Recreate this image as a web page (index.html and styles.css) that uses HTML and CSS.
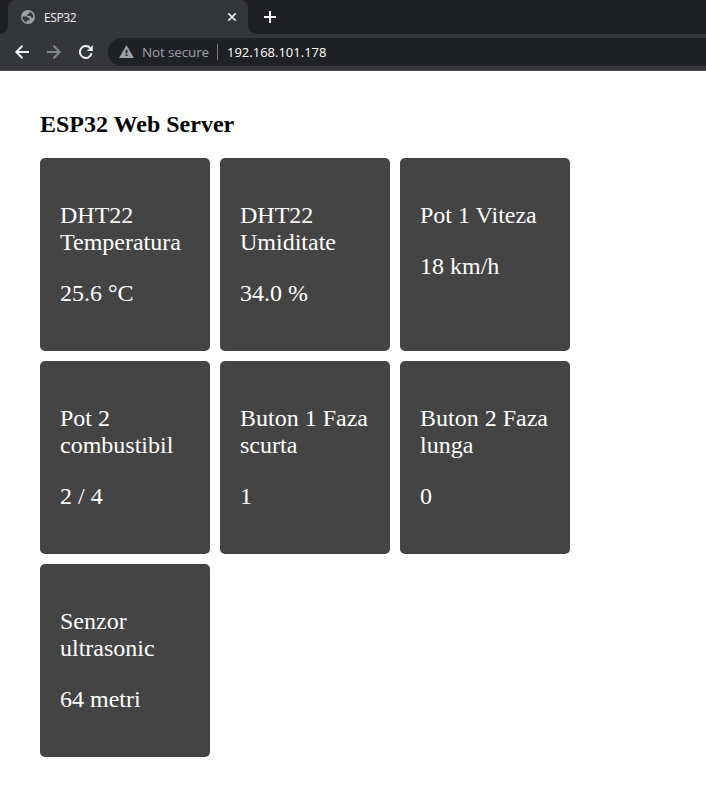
FILE: index.html
```html
<!DOCTYPE html>
<html lang="ro">
<head>
<meta charset="utf-8">
<title>ESP32</title>
<link rel="stylesheet" href="styles.css">
</head>
<body>
<header class="browser">
  <div class="tabs">
    <div class="tab">
      <svg class="globe" width="14" height="14" viewBox="0 0 14 14"><circle cx="7" cy="7" r="7" fill="#9aa0a6"/><path fill="#35363a" d="M1.500 6.500H5c1.300 0 2 .7 2 1.700h1.500v1.300c0 .7-.5 1.100-1.500 1.100H5.800v1.800C3.300 12 1.400 9.800 1.500 6.500zM8.300 1.700v1.100c0 .8-.5 1.200-1.200 1.200H6.200v1c0 .7.500 1 1.300 1h1.700c.5 0 .8.400.8.900s.4.900 1 .9h1.400C12.600 4.800 11 2.400 8.300 1.700z"/></svg>
      <span class="tab-title">ESP32</span>
      <svg class="close" width="10" height="10" viewBox="0 0 10 10"><path d="M1.300 1.300 8.700 8.700M8.700 1.300 1.300 8.700" stroke="#e8eaed" stroke-width="1.700"/></svg>
    </div>
    <svg class="plus" width="12" height="12" viewBox="0 0 12 12"><path d="M6 0v12M0 6h12" stroke="#fff" stroke-width="2"/></svg>
  </div>
  <div class="toolbar">
    <svg class="back" width="14" height="14" viewBox="0 0 14 14"><path d="M14 7H1.500M7.500.8 1.300 7l6.200 6.200" fill="none" stroke="#f1f3f4" stroke-width="2"/></svg>
    <svg class="forward" width="14" height="14" viewBox="0 0 14 14"><path d="M0 7h12.500M6.500.8 12.700 7l-6.200 6.200" fill="none" stroke="#85868a" stroke-width="2"/></svg>
    <svg class="reload" width="14" height="14" viewBox="0 0 14 14"><path d="M12.600 8.300A5.900 5.900 0 1 1 11.200 3" fill="none" stroke="#f1f3f4" stroke-width="2"/><path d="M13.800 0v6H7.800z" fill="#f1f3f4"/></svg>
    <div class="address">
      <svg class="warning" width="15" height="13" viewBox="0 0 15 13"><path d="M7.500 0 15 13H0z" fill="#9aa0a6"/><path d="M7.500 4.700v3.600M7.500 9.300V11" stroke="#202124" stroke-width="1.800"/></svg>
      <span class="security">Not secure</span>
      <span class="divider"></span>
      <span class="url">192.168.101.178</span>
    </div>
  </div>
</header>
<main>
  <h2>ESP32 Web Server</h2>
  <div class="grid">
    <section class="card"><p>DHT22 Temperatura</p><p>25.6 °C</p></section>
    <section class="card"><p>DHT22 Umiditate</p><p>34.0 %</p></section>
    <section class="card"><p>Pot 1 Viteza</p><p>18 km/h</p></section>
    <section class="card"><p>Pot 2 combustibil</p><p>2 / 4</p></section>
    <section class="card"><p>Buton 1 Faza scurta</p><p>1</p></section>
    <section class="card"><p>Buton 2 Faza lunga</p><p>0</p></section>
    <section class="card"><p>Senzor ultrasonic</p><p>64 metri</p></section>
  </div>
</main>
</body>
</html>
```
FILE: styles.css
```css
* { box-sizing: border-box; }
body { margin: 0; background: #fff; font-family: "Liberation Serif", "Times New Roman", serif; overflow: hidden; }
svg { display: block; flex: none; }
.browser { height: 71px; background: #35363a; border-bottom: 1px solid #505155; font-family: "Open Sans", sans-serif; }
.tabs { height: 34px; display: flex; align-items: center; padding-left: 8px; background: #202124; }
.tab { position: relative; width: 240px; height: 34px; display: flex; align-items: center; padding: 0 11px 0 13px; background: #35363a; border-radius: 8px 8px 0 0; }
.tab::before, .tab::after { content: ""; position: absolute; bottom: 0; width: 8px; height: 8px; }
.tab::before { left: -8px; background: radial-gradient(circle at 0 0, #202124 7.500px, #35363a 8px); }
.tab::after { right: -8px; background: radial-gradient(circle at 100% 0, #202124 7.500px, #35363a 8px); }
.tab-title { margin-left: 9px; color: #f1f3f4; font-size: 12px; letter-spacing: -0.400px; }
.close { margin-left: auto; }
.plus { margin-left: 16px; }
.toolbar { height: 36px; display: flex; align-items: center; padding-left: 15px; }
.forward { margin-left: 18px; }
.reload { margin-left: 18px; }
.address { flex: 1; height: 28px; margin-left: 15px; padding-left: 11px; display: flex; align-items: center; background: #202124; border-radius: 14px 0 0 14px; font-size: 13px; white-space: nowrap; }
.warning { margin-bottom: 1px; }
.security { width: 67px; margin-left: 8px; color: #9aa0a6; font-size: 13.500px; letter-spacing: -0.150px; }
.divider { width: 1px; height: 16px; margin: 0 9px 0 8px; background: #77797d; }
.url { color: #fff; }
main { padding: 40px; }
h2 { margin: 0 0 20px; font-size: 24px; line-height: 27px; }
.grid { display: grid; grid-template-columns: repeat(3, 170px); gap: 10px; }
.card { height: 193px; padding: 20px; background: #444; color: #fff; border-radius: 5px; font-size: 24px; line-height: 27px; }
.card p { margin: 24px 0; }
```
